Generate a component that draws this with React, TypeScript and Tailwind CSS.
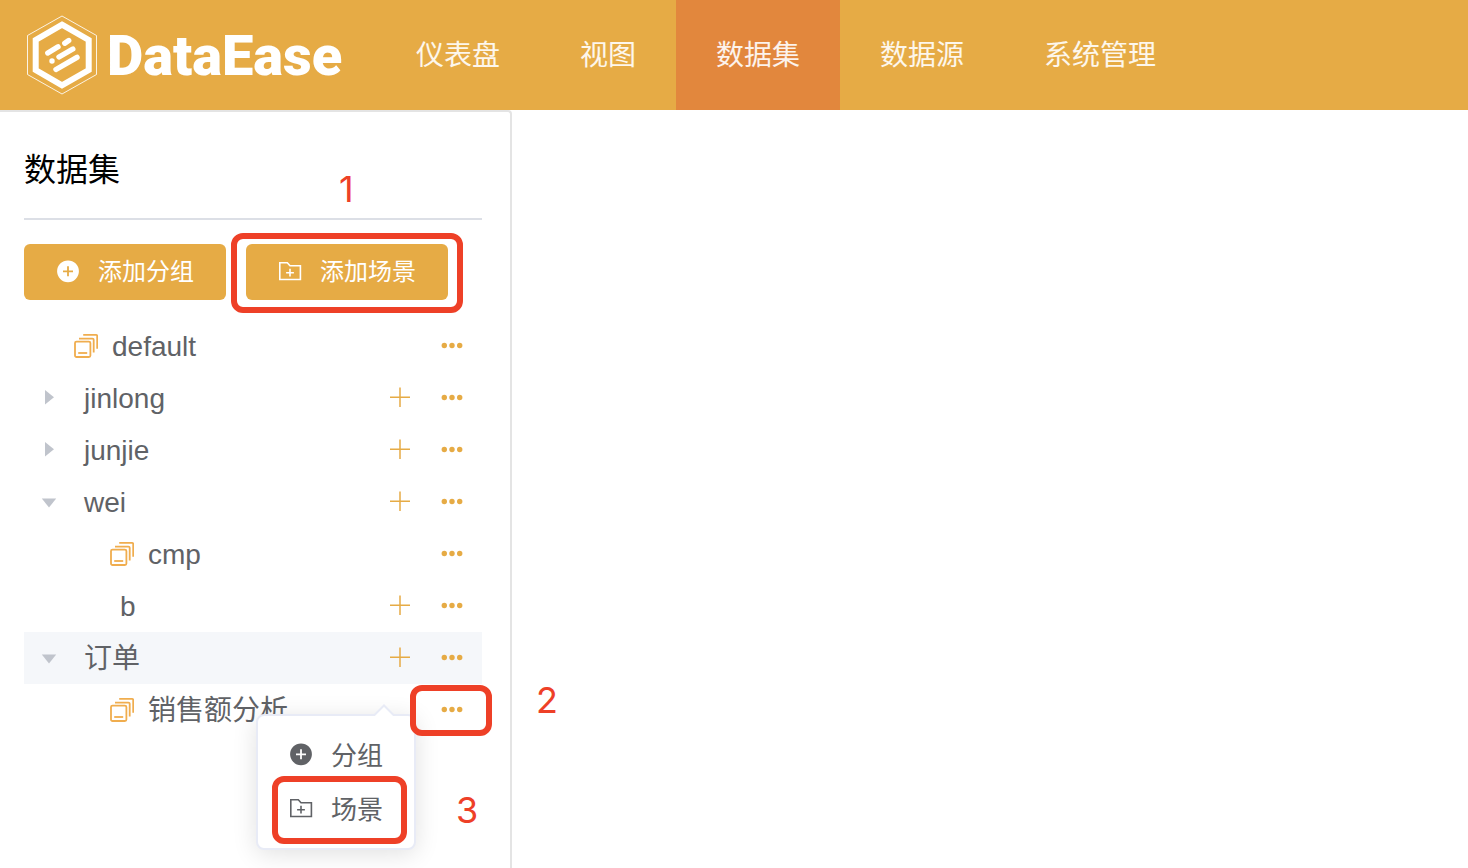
import type { ReactNode } from "react";

type TreeItem = {
  name: string;
  level: 0 | 1;
  kind: "scene" | "group";
  state?: "open" | "closed";
  selected?: boolean;
  menuOpen?: boolean;
};

const navItems = ["仪表盘", "视图", "数据集", "数据源", "系统管理"];
const activeNav = "数据集";

const treeItems: TreeItem[] = [
  { name: "default", level: 0, kind: "scene" },
  { name: "jinlong", level: 0, kind: "group", state: "closed" },
  { name: "junjie", level: 0, kind: "group", state: "closed" },
  { name: "wei", level: 0, kind: "group", state: "open" },
  { name: "cmp", level: 1, kind: "scene" },
  { name: "b", level: 1, kind: "group" },
  { name: "订单", level: 0, kind: "group", state: "open", selected: true },
  { name: "销售额分析", level: 1, kind: "scene", menuOpen: true },
];

function LogoMark() {
  return (
    <svg width="72" height="80" viewBox="0 0 72 80" fill="none" stroke="#fff" aria-hidden="true">
      <path d="M36 1 70.5 20.5V59.5L36 79 1.500 59.500V20.500Z" strokeWidth="1" opacity="0.85" />
      <path d="M36 9.700 62.700 25V55L36 70.300 9.700 55V25Z" strokeWidth="6" />
      <g strokeLinecap="round" strokeWidth="5.400">
        <path d="M21.800 38 32 31.800" />
        <path d="M38.800 28.200 42.700 25.600" />
        <path d="M33 42 46.800 34" />
        <path d="M26 46h.01" />
        <path d="M30 54.500 51 42.300" />
      </g>
    </svg>
  );
}

function PlusCircleIcon() {
  return (
    <svg width="24" height="24" viewBox="0 0 24 24" className="shrink-0" aria-hidden="true">
      <path
        fill="currentColor"
        fillRule="evenodd"
        d="M12 .4a10.900 10.900 0 1 1 0 21.800a10.900 10.900 0 1 1 0-21.800ZM11.100 6.300v4.100H7v1.800h4.100v4.100h1.800v-4.100H17v-1.800h-4.100V6.300Z"
      />
    </svg>
  );
}

function FolderPlusIcon() {
  return (
    <svg width="24" height="24" viewBox="0 0 24 24" fill="none" stroke="currentColor" strokeWidth="1.600" className="shrink-0" aria-hidden="true">
      <path d="M1.800 2.800H9.300L12 5.800H22.400V19.500H1.800Z" />
      <path d="M12 8.800v7.800M8.100 12.700h7.800" />
    </svg>
  );
}

function SceneIcon() {
  return (
    <svg width="24" height="24" viewBox="0 0 24 24" fill="none" stroke="#f0ad4e" strokeWidth="1.800" className="shrink-0" aria-hidden="true">
      <rect x="1" y="7.600" width="15.400" height="15.400" rx="1.500" />
      <path d="M4.200 19h9" />
      <path d="M5 4.600h13.500a1.200 1.200 0 0 1 1.200 1.200V18.500" />
      <path d="M9.200 .9h12.800a1.200 1.200 0 0 1 1.200 1.200V14.800" />
    </svg>
  );
}

function Caret({ open }: { open: boolean }) {
  return (
    <svg width="24" height="24" viewBox="0 0 24 24" fill="#c0c4cc" aria-hidden="true">
      {open ? <path d="M4.800 8.500h14.400L12 17.500Z" /> : <path d="M8 4v14.500l9-7.250Z" />}
    </svg>
  );
}

function PlusIcon() {
  return (
    <svg width="24" height="24" viewBox="0 0 24 24" stroke="#e6ab45" strokeWidth="1.500" aria-hidden="true">
      <path d="M12 1.500v19.500M2 11.200h20" />
    </svg>
  );
}

function MoreIcon() {
  return (
    <svg width="24" height="24" viewBox="0 0 24 24" fill="#e6ab45" aria-hidden="true">
      <circle cx="4.300" cy="11.500" r="2.700" />
      <circle cx="12" cy="11.500" r="2.700" />
      <circle cx="19.700" cy="11.500" r="2.700" />
    </svg>
  );
}

function PrimaryButton({ icon, children }: { icon: ReactNode; children: ReactNode }) {
  return (
    <button type="button" className="flex h-14 items-center gap-[18px] rounded-md bg-[#e6ab45] px-8 text-2xl text-white">
      {icon}
      <span>{children}</span>
    </button>
  );
}

const frame = "pointer-events-none absolute z-20 rounded-xl border-6 border-[#ee4027]";
const step = "pointer-events-none absolute z-20 font-['Inter',sans-serif] text-4xl leading-10 text-[#ee4027]";

function ActionMenu() {
  return (
    <div className="absolute top-[30px] right-[66px] z-10 w-[160px] rounded-lg border-2 border-[#e8ebf6] bg-white py-3 shadow-[0_4px_24px_rgba(0,0,0,0.12)]">
      <svg width="24" height="12" viewBox="0 0 24 12" className="absolute -top-3 right-[18px]" aria-hidden="true">
        <path d="M2 12 12 2 22 12Z" fill="#fff" />
        <path d="M1 11.500H2L12 1.500 22 11.500H23" fill="none" stroke="#e8ebf6" strokeWidth="2" />
      </svg>
      <button type="button" className="flex h-[54px] w-full items-center gap-[18px] pl-[31px] text-[26px]">
        <PlusCircleIcon />
        <span className="pt-0.5">分组</span>
      </button>
      <div className="relative">
        <button type="button" className="flex h-[54px] w-full items-center gap-[18px] pl-[31px] text-[26px]">
          <FolderPlusIcon />
          <span className="pt-0.5">场景</span>
        </button>
        <span className={`${frame} -top-[6px] -bottom-2 left-[14px] right-[7px]`} />
        <span className={`${step} top-2 left-[198px]`}>3</span>
      </div>
    </div>
  );
}

function TreeRow({ item }: { item: TreeItem }) {
  return (
    <li className={`relative flex h-[52px] items-center pr-[18px] ${item.level === 1 ? "pl-9" : ""} ${item.selected ? "bg-[#f5f7fa]" : ""}`}>
      <span className="flex w-[50px] justify-center">
        {item.state && (
          <button type="button" aria-label={item.state === "open" ? "收起" : "展开"}>
            <Caret open={item.state === "open"} />
          </button>
        )}
      </span>
      {item.kind === "scene" ? (
        <span className="flex items-center gap-[14px]">
          <SceneIcon />
          <span className="pt-0.5">{item.name}</span>
        </span>
      ) : (
        <span className="pt-0.5 pl-[10px]">{item.name}</span>
      )}
      <span className="ml-auto flex items-center gap-7">
        {item.kind === "group" && (
          <button type="button" aria-label="添加">
            <PlusIcon />
          </button>
        )}
        <button type="button" aria-label="更多">
          <MoreIcon />
        </button>
      </span>
      {item.menuOpen && (
        <>
          <ActionMenu />
          <span className={`${frame} top-px bottom-0 -right-[10px] w-[82px]`} />
          <span className={`${step} -top-1 -right-[76px]`}>2</span>
        </>
      )}
    </li>
  );
}

export default function App() {
  return (
    <div className="flex min-h-screen flex-col bg-white font-['Liberation_Sans','Noto_Sans_CJK_SC',sans-serif] text-[#606266]">
      <header className="flex h-[110px] bg-[#e6ab45] text-white">
        <a href="#" className="flex w-[376px] shrink-0 items-center gap-[9px] pl-[26px]">
          <LogoMark />
          <span className="pt-0.5 font-['Roboto',sans-serif] text-[56px] leading-none font-black">DataEase</span>
        </a>
        <nav className="flex">
          {navItems.map((name) => (
            <a
              key={name}
              href="#"
              className={`flex items-center px-10 pt-0.5 text-[28px] text-white/90 ${name === activeNav ? "bg-[#e2873d]" : ""}`}
            >
              {name}
            </a>
          ))}
        </nav>
      </header>
      <div className="flex flex-1">
        <aside className="w-[512px] shrink-0 rounded-tr-sm border-t-2 border-r-2 border-[#e4e4e4] pr-7 pl-6">
          <h1 className="border-b-2 border-[#dcdfe6] pt-[34px] pb-6 text-[32px] leading-[48px] text-black">数据集</h1>
          <div className="flex gap-5 pt-6 pb-5">
            <PrimaryButton icon={<PlusCircleIcon />}>添加分组</PrimaryButton>
            <div className="relative">
              <PrimaryButton icon={<FolderPlusIcon />}>添加场景</PrimaryButton>
              <span className={`${frame} -inset-x-[15px] -top-[11px] -bottom-[13px]`} />
              <span className={`${step} -top-[75px] left-[93px]`}>1</span>
            </div>
          </div>
          <ul className="text-[28px] leading-[52px]">
            {treeItems.map((item) => (
              <TreeRow key={item.name} item={item} />
            ))}
          </ul>
        </aside>
        <main className="flex-1" />
      </div>
    </div>
  );
}
